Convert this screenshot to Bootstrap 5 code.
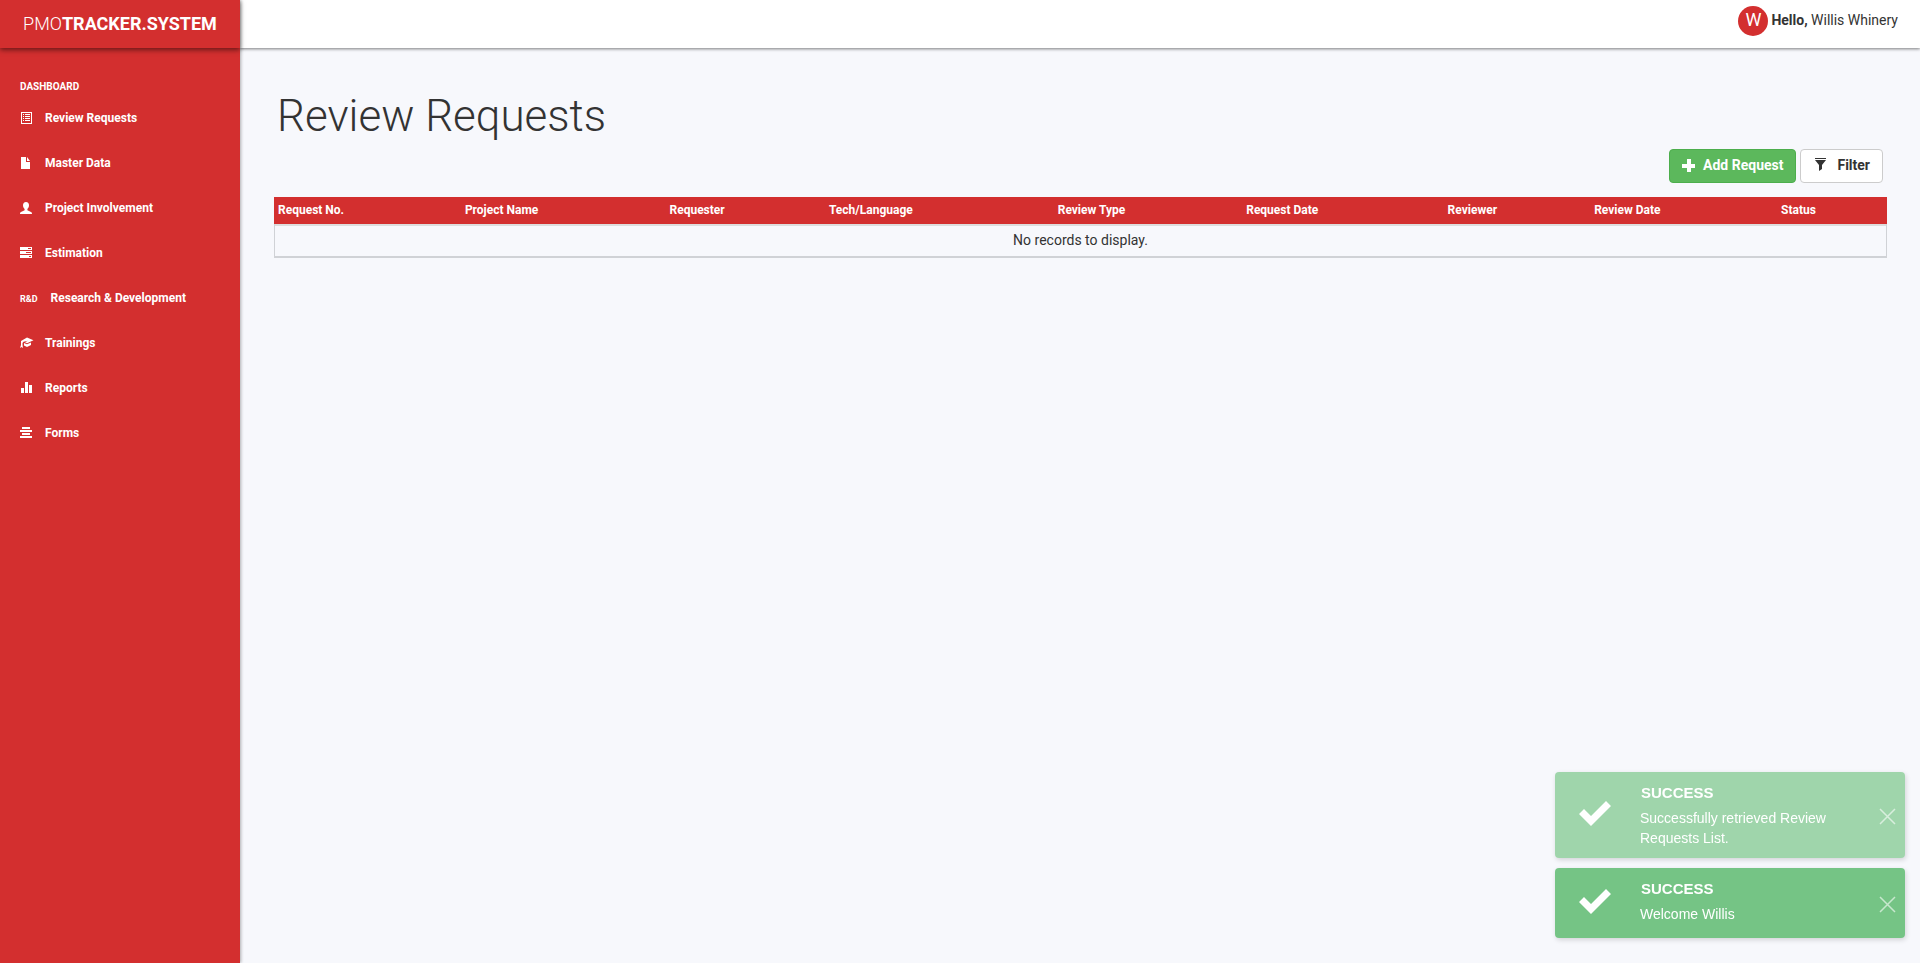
<!DOCTYPE html>
<html lang="en">
<head>
<meta charset="utf-8">
<meta name="viewport" content="width=device-width, initial-scale=1">
<title>PMO Tracker System - Review Requests</title>
<link href="https://cdn.jsdelivr.net/npm/bootstrap@5.3.0/dist/css/bootstrap.min.css" rel="stylesheet">
<style>
:root { --brand: #d32f2f; }
body { font-family: Roboto, "Liberation Sans", sans-serif; font-size: 14px; line-height: 20px; color: #333; background: #f7f8fc; }
.side { width: 240px; background: var(--brand); box-shadow: 1px 0 3px rgba(0,0,0,.3); z-index: 2; }
.brand { height: 48px; font-size: 18px; line-height: 48px; font-weight: 300; color: #fff; box-shadow: 0 2px 5px rgba(0,0,0,.5); }
.brand:hover { color: #fff; }
.brand strong { font-weight: 700; }
.side-title { font-size: 10px; line-height: 12px; font-weight: 700; margin: 33px 0 8px; padding-left: 20px; color: #fff; }
.side-link { height: 45px; padding: 0 20px 12px; gap: 13px; font-size: 12px; font-weight: 700; color: #fff; }
.side-link:hover { color: #fff; }
.side-link svg { fill: #fff; }
.side-tag { font-size: 9px; padding-top: 2px; }
.topbar { height: 48px; padding: 6px 22px 0 0; background: #fff; box-shadow: 0 1px 3px rgba(0,0,0,.5); }
.avatar { width: 30px; height: 30px; background: var(--brand); color: #fff; font-size: 18px; line-height: 28px; }
.hello { padding-left: 3px; }
.hello b { font-weight: 700; }
.content-area { padding: 40px 33px 0 34px; }
.page-title { font-size: 44px; line-height: 54px; font-weight: 300; padding: 1px 0 0 3px; margin: 0 0 6px; }
.tools { gap: 4px; padding-right: 4px; margin-bottom: 14px; }
.tools .btn { font-size: 14px; line-height: 20px; font-weight: 700; padding: 5px 12px 7px; border-radius: 4px; }
.btn-add, .btn-add:hover { background: #5cb85c; border-color: #4cae4c; color: #fff; }
.tools .btn-filter, .tools .btn-filter:hover { background: #fff; border-color: #ccc; color: #333; }
.requests { width: 100%; table-layout: fixed; border: 1px solid #d0d2d6; border-top: 0; border-bottom-width: 2px; border-collapse: separate; border-spacing: 0; }
.requests-wrap { overflow-x: auto; }
.requests th { height: 27px; padding: 0 4px 2px 3px; font-size: 12px; line-height: 16px; font-weight: 700; color: #fff; background: var(--brand); }
.requests td { height: 32px; padding: 0 4px 2px; text-align: center; border-top: 2px solid #ddd; }
.requests th:first-child { box-shadow: -1px 0 var(--brand); }
.requests th:last-child { box-shadow: 1px 0 var(--brand); }
.c1, .c8 { width: 11.6%; } .c2 { width: 12.7%; } .c3 { width: 9.9%; } .c4 { width: 14.2%; }
.c5 { width: 11.7%; } .c6 { width: 12.5%; } .c7 { width: 9.1%; } .c9 { width: 6.7%; }
.notices { right: 15px; bottom: 25px; width: 350px; gap: 10px; z-index: 5; font-family: "Liberation Sans", Arial, sans-serif; }
.notice { min-height: 70px; background: #75c485; color: #fff; border-radius: 4px; padding: 12px 9px 10px 24px; box-shadow: 1px 2px 5px rgba(0,0,0,.15); }
.notice-old { background: #9fd5ab; }
.notice h2 { font-size: 15px; line-height: 18px; font-weight: 700; margin: 0 0 6px; padding-left: 1px; }
.notice p { margin: 0; width: 200px; }
.notice-text { margin-left: 29px; }
.notice .tick { margin-bottom: 4px; }
.notice button { background: none; border: 0; padding: 0; line-height: 0; opacity: .6; }
</style>
</head>
<body>
<div class="d-flex min-vh-100">
  <nav class="side flex-shrink-0 position-relative" aria-label="Main">
    <a href="#" class="brand d-block text-center text-decoration-none">PMO<strong>TRACKER.SYSTEM</strong></a>
    <div class="side-title">DASHBOARD</div>
    <div class="d-flex flex-column">
      <a href="#" class="side-link d-flex align-items-center text-decoration-none"><svg width="12" height="12" viewBox="0 0 12 12"><path fill-rule="evenodd" d="M1 0h11v12H1zM2 1v10h9V1zM3 2h1v1H3zM5 2h5v1H5zM3 4h1v1H3zM5 4h5v1H5zM3 6h1v1H3zM5 6h5v1H5zM3 8h1v1H3zM5 8h5v1H5z"/></svg>Review Requests</a>
      <a href="#" class="side-link d-flex align-items-center text-decoration-none"><svg width="12" height="12" viewBox="0 0 12 12"><path d="M1 0h5v5h4v7H1zM7 0l3 4H7z"/></svg>Master Data</a>
      <a href="#" class="side-link d-flex align-items-center text-decoration-none"><svg width="12" height="12" viewBox="0 0 12 12"><path d="M6 0c2 0 3 1.300 3 3.200 0 1.600-.8 3-1.600 3.800v1.200L11 10c.7.300 1 .8 1 2H0c0-1.200.3-1.700 1-2l3.600-1.800V7C3.800 6.200 3 4.800 3 3.200 3 1.300 4 0 6 0z"/></svg>Project Involvement</a>
      <a href="#" class="side-link d-flex align-items-center text-decoration-none"><svg width="12" height="12" viewBox="0 0 12 12"><path fill-rule="evenodd" d="M0 0h12v3H0zM8 1v1h3V1zM0 4h12v3H0zM6 5v1h5V5zM0 8h12v3H0zM9 9v1h2V9z"/></svg>Estimation</a>
      <a href="#" class="side-link d-flex align-items-center text-decoration-none"><span class="side-tag">R&amp;D</span>Research &amp; Development</a>
      <a href="#" class="side-link d-flex align-items-center text-decoration-none"><svg width="12" height="12" viewBox="0 0 12 12" overflow="visible"><path d="M1 4l6-3.500 6.500 2.800-6.500 3-2-1L8 3.800 3.500 4.800 2.500 6v2l.5 3-1.500-1L0 11l1-3V6zM4 6l3 1.300 4-1.800v2.500L7 10 4 8.500z"/></svg>Trainings</a>
      <a href="#" class="side-link d-flex align-items-center text-decoration-none"><svg width="12" height="12" viewBox="0 0 12 12"><path d="M1 6h3v5H1zM5 0h3v11H5zM9 3h3v8H9z"/></svg>Reports</a>
      <a href="#" class="side-link d-flex align-items-center text-decoration-none"><svg width="12" height="12" viewBox="0 0 12 12"><path d="M2 0h8v2H2zM0 3h12v2H0zM2 6h8v2H2zM0 9h12v2H0z"/></svg>Forms</a>
    </div>
  </nav>

  <div class="flex-grow-1">
    <header class="topbar d-flex justify-content-end align-items-start">
      <span class="avatar rounded-circle text-center">W</span>
      <span class="hello pt-1"><b>Hello,</b> Willis Whinery</span>
    </header>
    <main class="content-area">
      <h1 class="page-title">Review Requests</h1>
      <div class="tools d-flex justify-content-end">
        <button type="button" class="btn btn-add d-flex align-items-center gap-2"><svg width="13" height="13" viewBox="0 0 13 13" fill="#fff"><path d="M5 0h4v5h4v4H9v4H5V9H0V5h5z"/></svg>Add Request</button>
        <button type="button" class="btn btn-filter d-flex align-items-center gap-2"><svg width="16" height="14" viewBox="0 0 16 14" fill="#333"><path d="M2 0h11v1H2zM2 2h11L9 7v4l-3 2V7z"/></svg>Filter</button>
      </div>
      <div class="requests-wrap">
        <table class="requests">
          <colgroup><col class="c1"><col class="c2"><col class="c3"><col class="c4"><col class="c5"><col class="c6"><col class="c7"><col class="c8"><col class="c9"></colgroup>
          <thead><tr><th scope="col">Request No.</th><th scope="col">Project Name</th><th scope="col">Requester</th><th scope="col">Tech/Language</th><th scope="col">Review Type</th><th scope="col">Request Date</th><th scope="col">Reviewer</th><th scope="col">Review Date</th><th scope="col">Status</th></tr></thead>
          <tbody><tr><td colspan="9">No records to display.</td></tr></tbody>
        </table>
      </div>
    </main>
  </div>
</div>

<div class="notices position-fixed d-flex flex-column" aria-live="polite">
  <div class="notice notice-old d-flex align-items-center" role="status">
    <svg class="tick" width="32" height="26" viewBox="0 0 32 26" fill="#fff"><path d="M0 13l5-5 7 7L27 0l5 5-20 20z"/></svg>
    <div class="notice-text flex-grow-1 align-self-start"><h2>SUCCESS</h2><p>Successfully retrieved Review Requests List.</p></div>
    <button type="button" aria-label="Close"><svg width="17" height="17" viewBox="0 0 17 17" stroke="#fff" stroke-width="1.500"><path d="M1 1l15 15M16 1L1 16"/></svg></button>
  </div>
  <div class="notice d-flex align-items-center" role="status">
    <svg class="tick" width="32" height="26" viewBox="0 0 32 26" fill="#fff"><path d="M0 13l5-5 7 7L27 0l5 5-20 20z"/></svg>
    <div class="notice-text flex-grow-1 align-self-start"><h2>SUCCESS</h2><p>Welcome Willis</p></div>
    <button type="button" aria-label="Close"><svg width="17" height="17" viewBox="0 0 17 17" stroke="#fff" stroke-width="1.500"><path d="M1 1l15 15M16 1L1 16"/></svg></button>
  </div>
</div>
<script src="https://cdn.jsdelivr.net/npm/bootstrap@5.3.0/dist/js/bootstrap.bundle.min.js"></script>
</body>
</html>
